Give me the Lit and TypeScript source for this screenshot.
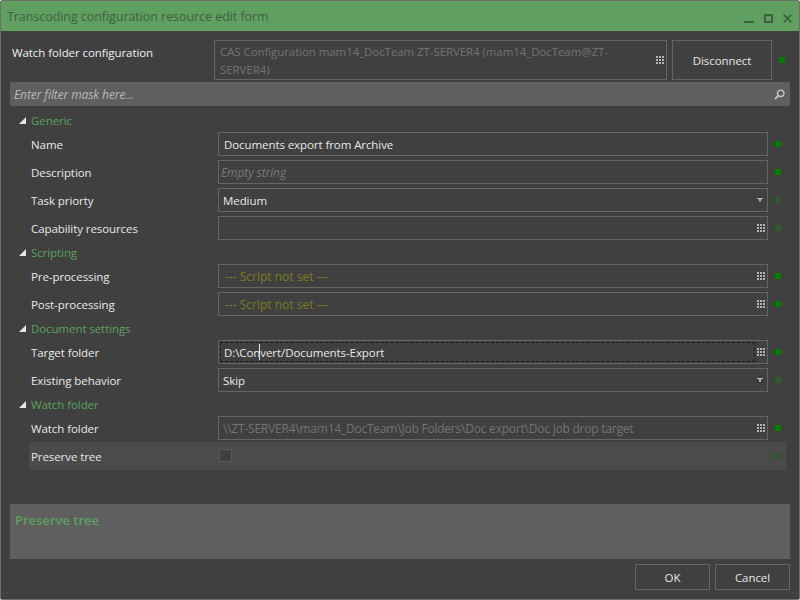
import { LitElement, html, css, svg } from "lit";
import { customElement } from "lit/decorators.js";

const grid = html`<svg class="ico g" width="8" height="8" viewBox="0 0 8 8">${[0, 3, 6].flatMap((y) => [0, 3, 6].map((x) => svg`<rect x=${x} y=${y} width="2" height="2" fill="#b4b4b4"></rect>`))}</svg>`;
const arrow = html`<svg class="ico a" width="6" height="4" viewBox="0 0 6 4"><path d="M0 0H6V1H4.500L3.700 3V4H2.300V3L1.500 1H0Z" fill="#b4b4b4"></path></svg>`;
const tri = html`<svg class="tri" width="7" height="7" viewBox="0 0 7 7"><path d="M7 0V7H0Z" fill="#e6e6e6"></path></svg>`;

@customElement("app-root")
export class AppRoot extends LitElement {
  static styles = css`
    :host { display: block; width: 800px; height: 600px; background: #fff; font: 11.500px "Open Sans", "Noto Sans", sans-serif; letter-spacing: -0.08px; color: #e8e8e8; }
    .win { box-sizing: border-box; width: 800px; height: 600px; border: 1px solid #6e6e6e; border-radius: 2px; background: #404040; display: flex; flex-direction: column; overflow: hidden; }
    .title { height: 30px; flex: none; box-sizing: border-box; padding: 1px 6px 0; background: #5fa060; display: flex; align-items: center; color: #3f5f42; font-size: 12.500px; letter-spacing: -0.06px; }
    .title span { flex: 1; }
    .title svg { display: block; }
    .wbtns { display: flex; align-items: flex-end; gap: 10px; margin-right: 1px; padding-top: 3px; }
    .top { display: flex; height: 40px; margin-top: 9px; padding-left: 11px; align-items: flex-start; }
    .top .lbl { width: 202px; padding-top: 3px; color: #f0f0f0; line-height: 20px; }
    .field { box-sizing: border-box; border: 1px solid #656565; height: 24px; display: flex; align-items: center; position: relative; }
    .topfield { box-sizing: border-box; border: 1px solid #656565; width: 453px; height: 40px; padding: 2px 5px; line-height: 18px; color: #737373; position: relative; }
    .topfield .ico { position: absolute; right: 2px; top: 15px; }
    .btn { box-sizing: border-box; border: 1px solid #656565; display: flex; align-items: center; justify-content: center; color: #e6e6e6; }
    .disc { width: 100px; height: 40px; margin-left: 5px; }
    .dot { width: 6px; height: 6px; background: #008000; flex: none; }
    .dot.dim { background: #2d5a2d; }
    .top .dot { margin: 17px 0 0 7px; }
    .filter { height: 24px; margin: 2px 9px 4px; flex: none; background: #5f5f5f; display: flex; align-items: center; justify-content: space-between; padding: 0 5px 0 4px; font-style: italic; color: #b9b9b9; font-size: 12px; letter-spacing: -0.1px; }
    .head { height: 20px; display: flex; align-items: center; padding-left: 18px; color: #5aa35d; flex: none; }
    .tri { margin-right: 5px; }
    .row { height: 28px; flex: none; display: flex; align-items: center; padding-left: 30px; margin-right: 13px; }
    .row.sel { background: #4b4b4b; margin-left: 28px; margin-right: 13px; padding-left: 2px; }
    .row label { width: 187px; flex: none; color: #e8e8e8; }
    .row .field { width: 550px; }
    .row .dot { margin-left: 7px; }
    .txt { padding-left: 5px; flex: 1; white-space: nowrap; overflow: hidden; }
    .sel-txt { padding-left: 4px; }
    .ph { font-style: italic; color: #7a7a7a; padding-left: 2px; font-size: 12px; letter-spacing: -0.1px; }
    .dis { color: #737373; font-size: 12px; letter-spacing: -0.22px; padding-left: 4px; }
    .script { color: #7c7c20; font-size: 12px; letter-spacing: 0; padding-left: 6px; }
    .field .ico { position: absolute; top: 50%; transform: translateY(-50%); }
    .field .g { right: 2px; }
    .field .a { right: 4px; }
    .focus { position: absolute; left: 1px; top: 1px; bottom: 1px; right: 12px; border: 1px dashed #1e1e1e; }
    .caret { position: absolute; left: 40px; top: 3px; width: 1px; height: 16px; background: #e6e6e6; }
    .check { box-sizing: border-box; width: 13px; height: 13px; background: #404040; border: 1px solid #5a5a5a; margin-left: 1px; margin-top: -2px; }
    .row.sel .dot { margin-left: auto; margin-right: 5px; }
    .help { flex: none; margin: 34px 9px 0; height: 55px; background: #5f5f5f; box-sizing: border-box; padding: 7px 5px; color: #5aa35d; font-weight: 600; font-size: 13px; line-height: 18px; letter-spacing: 0; }
    .foot { display: flex; justify-content: flex-end; gap: 5px; margin: 5px 9px 0; }
    .foot .btn { width: 75px; height: 26px; }
  `;

  private row(label: string, body: unknown, dim = false) {
    return html`<div class="row"><label>${label}</label><div class="field">${body}</div><div class="dot ${dim ? "dim" : ""}"></div></div>`;
  }

  render() {
    return html`<div class="win">
      <div class="title"><span>Transcoding configuration resource edit form</span>
        <div class="wbtns">
          <svg width="10" height="2" viewBox="0 0 10 2"><rect width="10" height="2" fill="#3f5f42"></rect></svg>
          <svg width="9" height="9" viewBox="0 0 9 9"><path d="M1 1H8V8H1Z" fill="none" stroke="#3f5f42" stroke-width="2"></path></svg>
          <svg width="9" height="9" viewBox="0 0 9 9"><path d="M.7 .7L8.300 8.300M8.300 .7L.7 8.300" fill="none" stroke="#3f5f42" stroke-width="1.800"></path></svg>
        </div>
      </div>
      <div class="top">
        <div class="lbl">Watch folder configuration</div>
        <div class="topfield">CAS Configuration mam14_DocTeam ZT-SERVER4 (mam14_DocTeam@ZT-<br />SERVER4)${grid}</div>
        <div class="btn disc">Disconnect</div>
        <div class="dot"></div>
      </div>
      <div class="filter"><span>Enter filter mask here...</span>
        <svg width="11" height="11" viewBox="0 0 11 11"><circle cx="6.700" cy="4.300" r="3.200" fill="none" stroke="#c4c4c4" stroke-width="1.400"></circle><path d="M4.500 6.500L1 10" stroke="#c4c4c4" stroke-width="1.800"></path></svg>
      </div>
      <div class="head">${tri}Generic</div>
      ${this.row("Name", html`<span class="txt">Documents export from Archive</span>`)}
      ${this.row("Description", html`<span class="txt ph">Empty string</span>`)}
      ${this.row("Task priorty", html`<span class="txt sel-txt">Medium</span>${arrow}`, true)}
      ${this.row("Capability resources", grid, true)}
      <div class="head">${tri}Scripting</div>
      ${this.row("Pre-processing", html`<span class="txt script">--- Script not set ---</span>${grid}`)}
      ${this.row("Post-processing", html`<span class="txt script">--- Script not set ---</span>${grid}`)}
      <div class="head">${tri}Document settings</div>
      ${this.row("Target folder", html`<span class="txt">D:\\Convert/Documents-Export</span><div class="focus"></div><div class="caret"></div>${grid}`)}
      ${this.row("Existing behavior", html`<span class="txt sel-txt">Skip</span>${arrow}`, true)}
      <div class="head">${tri}Watch folder</div>
      ${this.row("Watch folder", html`<span class="txt dis">\\\\ZT-SERVER4\\mam14_DocTeam\\Job Folders\\Doc export\\Doc job drop target</span>${grid}`)}
      <div class="row sel"><label>Preserve tree</label><div class="check"></div><div class="dot dim"></div></div>
      <div class="help">Preserve tree</div>
      <div class="foot"><div class="btn">OK</div><div class="btn">Cancel</div></div>
    </div>`;
  }
}
